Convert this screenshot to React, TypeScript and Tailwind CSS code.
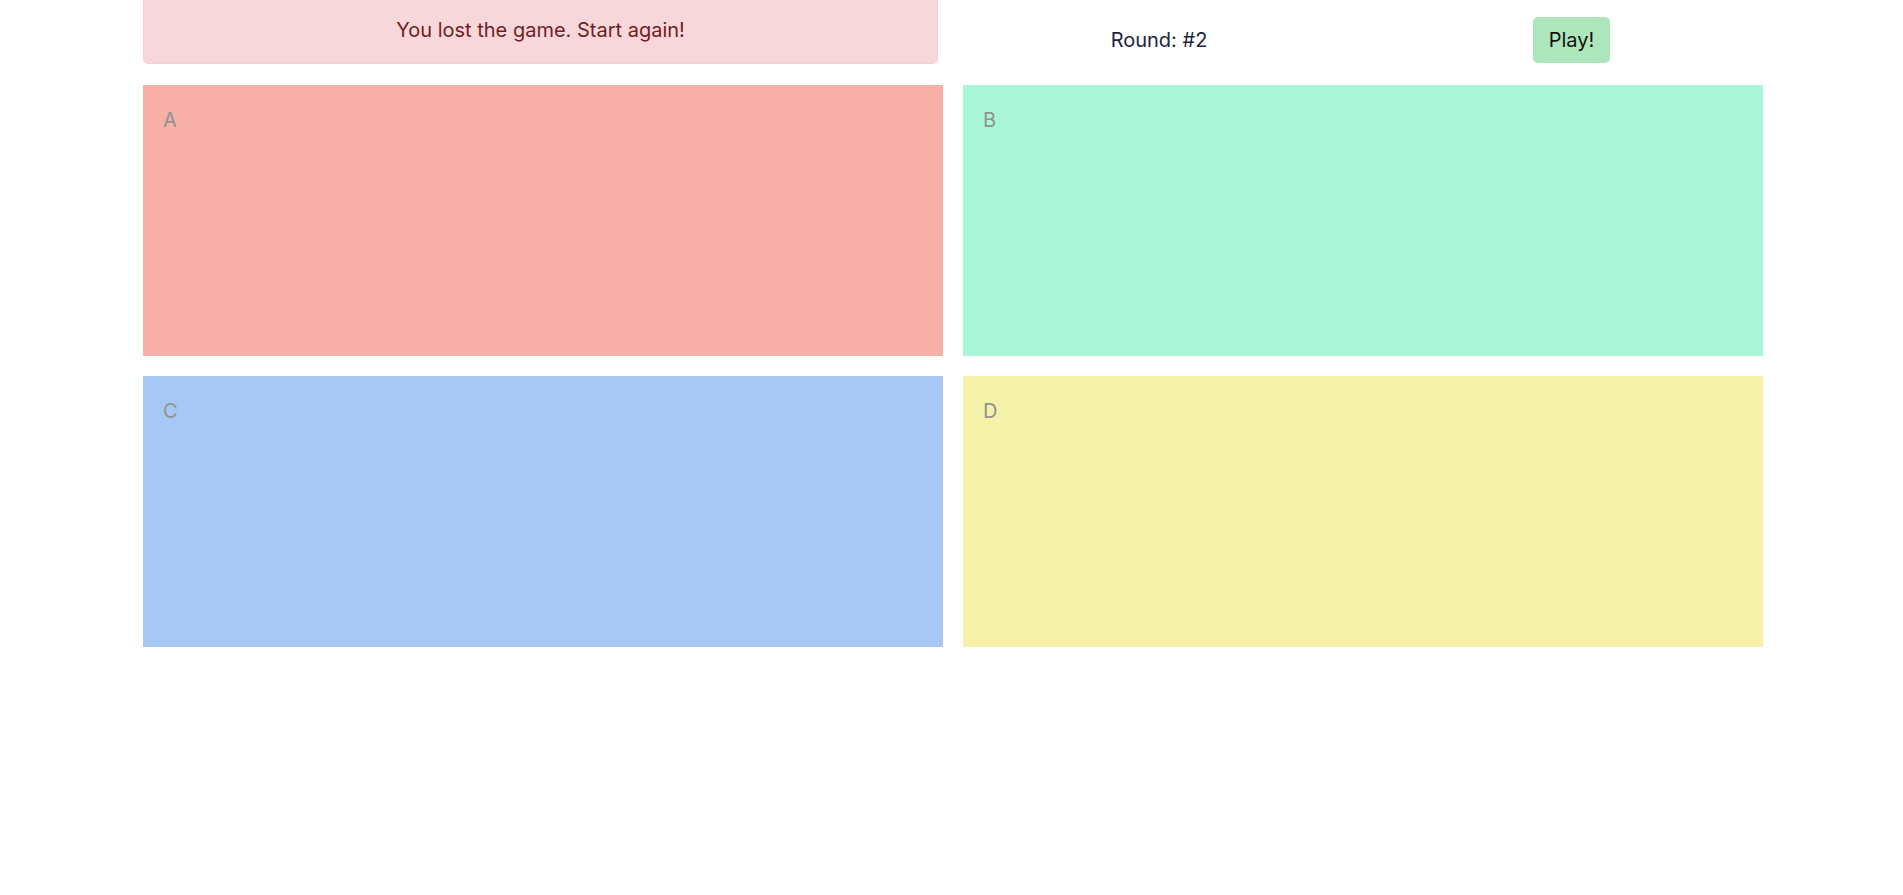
import React from "react";

type Pad = {
  label: string;
  color: string;
};

const pads: Pad[] = [
  { label: "A", color: "bg-[#f7afa8]" },
  { label: "B", color: "bg-[#a9f6d8]" },
  { label: "C", color: "bg-[#a8c7f5]" },
  { label: "D", color: "bg-[#f6f1a8]" },
];

const App = () => {
  return (
    <div className="min-h-[895px] bg-white font-['Inter','Open_Sans',sans-serif] text-[20px]">
      <div className="pl-[143px]">
        <div className="flex items-start w-[1620px]">
          <div className="w-[795px] h-[64px] pt-[15px] rounded-b-[5px] bg-[#f8d7da] border border-t-0 border-[#f6d0d4] text-center leading-[30px] text-[#721c24]">
            You lost the game. Start again!
          </div>
          <div className="w-[25px]"></div>
          <div className="w-[392px] h-[80px] flex items-center justify-center leading-[30px] text-[#1c2541]">
            Round: #2
          </div>
          <div className="h-[80px] flex items-center pl-[178px]">
            <button className="w-[77px] h-[46px] rounded-[5px] bg-[#ade6bb] text-[#111] leading-[30px]">
              Play!
            </button>
          </div>
        </div>

        <div className="mt-[5px] w-[1620px] grid grid-cols-2 gap-5">
          {pads.map((pad, key) => (
            <div key={key} className={`${pad.color} h-[271px] p-5`}>
              <span className="leading-[30px] text-[#929292]">{pad.label}</span>
            </div>
          ))}
        </div>
      </div>
    </div>
  );
};

export default App;
